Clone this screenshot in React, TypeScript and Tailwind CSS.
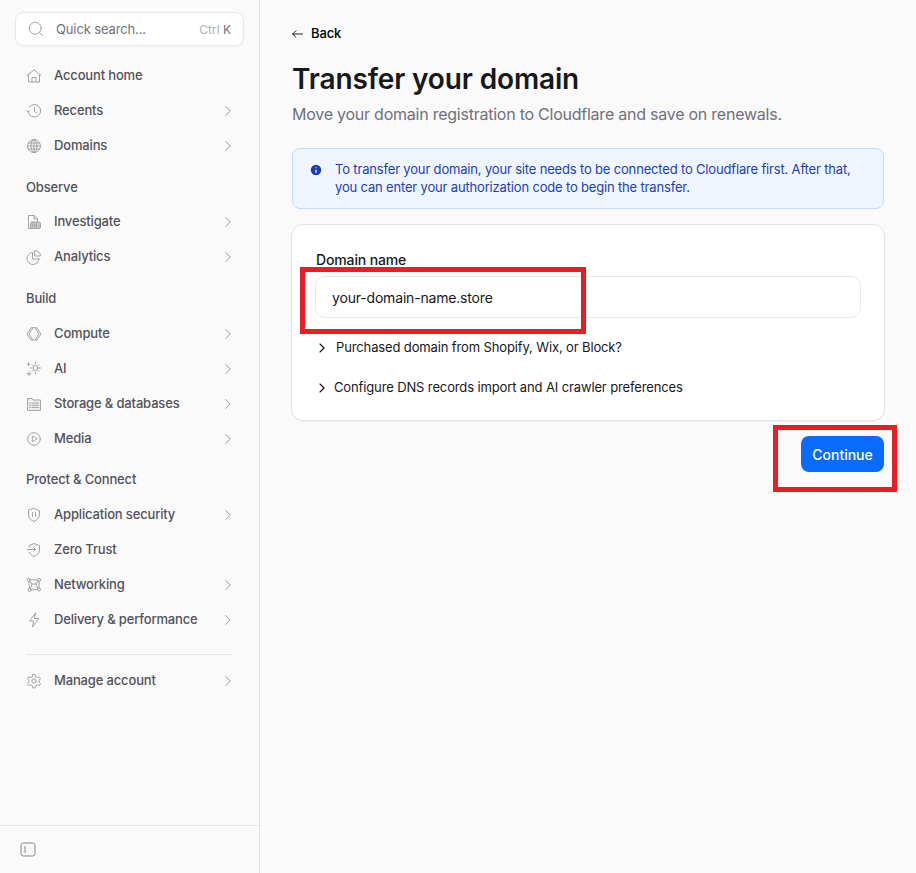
import React from "react";
import { ChevronRight, Search, Info } from "lucide-react";

const S = ({ children }: { children: React.ReactNode }) => (
  <svg width="16" height="16" viewBox="0 0 16 16" fill="none" stroke="#a3a3a3" strokeWidth="1" strokeLinecap="round" strokeLinejoin="round" className="shrink-0">
    {children}
  </svg>
);

const icons: Record<string, React.ReactNode> = {
  home: <S><path d="M1 7.500 8 2l7 5.500" /><path d="M2.500 6.500V14h11V6.500" /><path d="M6 14V9.500h4V14" /></S>,
  recents: <S><path d="M3.200 4.200A6.300 6.300 0 1 1 2.200 9" /><path d="M.8 7.500 2 9l1.600-1.200" /><path d="M8.500 4.500V8.500l2.500 1.500" /></S>,
  globe: <S><circle cx="8" cy="8" r="6.500" /><ellipse cx="8" cy="8" rx="3" ry="6.500" /><path d="M1.500 8h13M2.400 5h11.200M2.400 11h11.200M8 1.500v13" /></S>,
  investigate: <S><path d="M5 14.500H2.500V1.500H8L11.500 5V7.500" /><path d="M8 1.500V5h3.500" /><rect x="4.500" y="8" width="10" height="6.500" rx="1.500" fill="#c4c4c4" /><path d="M6.500 10v2.500M8.500 10v2.500M10.500 10v2.500" /></S>,
  analytics: <S><path d="M6.500 3.500a6 6 0 1 0 6.500 6.500" /><path d="M6.500 3.500V10H13" /><path d="M9 1.500a5.500 5.500 0 0 1 5.500 5.500H9Z" /></S>,
  compute: <S><path d="M5 2 1 8l4 6h6l4-6-4-6Z" /><path d="M6.500 2.500 3 8l3.500 5.500" /><path d="M9.500 2.500 13 8l-3.500 5.500" /></S>,
  ai: <S><circle cx="9.500" cy="7" r="2.500" /><path d="M9.500 1.500V3M9.500 11v1.500M4.500 7H6M13 7h1.500M6 3.500l1 1M12 9.500l1 1M13 3.500l-1 1M7 9.500l-1 1" /><path d="M2.500 2v2.500M1.200 3.200h2.600M3 11v3.500M1 12.800h4" /></S>,
  storage: <S><path d="M1.500 14V2.500h4.500l1 1.500h7.500v10Z" fill="#f0f0f0" /><path d="M3.500 7h1M6 7h6.500M3.500 9.200h1M6 9.200h6.500M3.500 11.400h1M6 11.400h6.500" /></S>,
  media: <S><circle cx="8" cy="8" r="6.300" /><path d="M6.300 5.300v5.400L10.800 8Z" /></S>,
  appsec: <S><path d="M8 1.500 13.500 3.500V8c0 3-2.500 5.200-5.500 6.500C5 13.200 2.500 11 2.500 8V3.500Z" /><path d="M6.500 5.500v4M9.500 5.500v4" /></S>,
  zero: <S><path d="M3 5V3.500L8 1.500l5.500 2V8c0 3-2.500 5.200-5.500 6.500C5.500 13.400 3.700 11.800 3 10" /><path d="M1.500 7.500H9.500M7.500 5.500l2 2-2 2" /></S>,
  network: <S><circle cx="2.800" cy="2.800" r="1.500" /><circle cx="13.200" cy="2.800" r="1.500" /><circle cx="3.500" cy="13" r="1.500" /><circle cx="13" cy="12.500" r="1.500" /><path d="M4.300 2.800h7.400M2.900 4.300 3.400 11.500M13.200 4.300 13 11M5 13l6.500-.5M3.900 3.900 6 7l-1.500 4.900M12.100 3.900 10 7l1.900 4.400M6 7h4" /></S>,
  bolt: <S><path d="M9.500 1 3.500 9h4l-1 6 6-8.500H8.500Z" /></S>,
  gear: <S><path d="M6.800 1.500h2.400l.4 2 1.800 1 1.900-.7 1.200 2.100-1.500 1.300v2l1.500 1.300-1.200 2.100-1.900-.7-1.800 1-.4 2H6.800l-.4-2-1.800-1-1.900.7-1.200-2.100 1.500-1.300v-2L1.500 5.900l1.200-2.100 1.900.7 1.800-1Z" /><circle cx="8" cy="8" r="2.200" /></S>,
};

function NavRow({ icon, label, chevron = true }: { icon: string; label: string; chevron?: boolean }) {
  return (
    <div className="flex h-[35px] items-center">
      <span className="flex w-7 items-center">{icons[icon]}</span>
      <span className="flex-1 text-[13px] font-medium tracking-[-0.012em] text-[#52525b]">{label}</span>
      {chevron && <ChevronRight size={18} strokeWidth={1} className="mr-[-4px] mt-[-1px] text-[#777777]" />}
    </div>
  );
}

function SectionLabel({ children, className }: { children: React.ReactNode; className: string }) {
  return <div className={`text-[13px] font-medium leading-5 tracking-[-0.012em] text-[#52525b] ${className}`}>{children}</div>;
}

export default function App() {
  return (
    <div className="flex h-[873px] w-[916px] overflow-hidden bg-[#fafafa] font-['Inter',sans-serif]">
      <aside className="flex h-full w-[260px] shrink-0 flex-col border-r border-[#e5e5e5]">
        <div className="flex-1 px-[15px] pt-3">
          <div className="flex h-[34px] items-center rounded-lg border border-[#e8e8e8] bg-white pl-[11px] pr-3 shadow-[0_1px_2px_rgba(0,0,0,0.03)]">
            <Search size={18} strokeWidth={1} className="text-[#8a8a8a]" />
            <span className="ml-[11px] flex-1 pt-px text-[13px] tracking-[-0.01em] text-[#71717a]">Quick search...</span>
            <span className="pt-px text-xs text-[#b0b0b0]">Ctrl <span className="text-[#71717a]">K</span></span>
          </div>
          <div className="mt-[12.500px] pl-[11px] pr-[11px]">
            <NavRow icon="home" label="Account home" chevron={false} />
            <NavRow icon="recents" label="Recents" />
            <NavRow icon="globe" label="Domains" />
            <SectionLabel className="mb-[7.500px] mt-[13.500px]">Observe</SectionLabel>
            <NavRow icon="investigate" label="Investigate" />
            <NavRow icon="analytics" label="Analytics" />
            <SectionLabel className="mb-[9px] mt-[13px]">Build</SectionLabel>
            <NavRow icon="compute" label="Compute" />
            <NavRow icon="ai" label="AI" />
            <NavRow icon="storage" label="Storage & databases" />
            <NavRow icon="media" label="Media" />
            <SectionLabel className="mb-[9px] mt-[12px]">Protect & Connect</SectionLabel>
            <NavRow icon="appsec" label="Application security" />
            <NavRow icon="zero" label="Zero Trust" chevron={false} />
            <NavRow icon="network" label="Networking" />
            <NavRow icon="bolt" label="Delivery & performance" />
            <div className="mt-[16px] border-t border-[#e5e5e5]" />
            <div className="mt-[9px]"><NavRow icon="gear" label="Manage account" /></div>
          </div>
        </div>
        <div className="flex h-[48px] items-center border-t border-[#e5e5e5] pl-5">
          <svg width="16" height="15" viewBox="0 0 16 15" fill="none" stroke="#858585" strokeWidth="1">
            <rect x="1" y="1" width="14" height="13" rx="2.500" />
            <path d="M5 4v7" />
          </svg>
        </div>
      </aside>

      <main className="relative flex-1 px-8 pt-[24px]">
        <div className="flex h-5 items-center gap-2 text-[13px] font-medium tracking-[-0.01em] text-black">
          <svg width="11" height="8" viewBox="0 0 11 8" fill="none" stroke="#222222" strokeWidth="1" strokeLinecap="round" strokeLinejoin="round">
            <path d="M10.500 4H.8M4 .7.700 4 4 7.300" />
          </svg>
          <span>Back</span>
        </div>
        <h1 className="mt-[11px] text-[28px] font-semibold leading-[48px] tracking-[-0.005em] text-[#18181b]">Transfer your domain</h1>
        <p className="mt-[-1px] text-base leading-6 tracking-[-0.015em] text-[#71717a]">Move your domain registration to Cloudflare and save on renewals.</p>

        <div className="mt-[22px] flex h-[61px] rounded-lg border border-[#bfdbfe] bg-[#eff6ff] pl-[16px] pr-4 pt-[11px]">
          <Info size={14} className="mr-[12px] mt-[3px] shrink-0 fill-[#1e40af] text-[#eff6ff]" strokeWidth={2} />
          <p className="text-[13px] leading-[18px] tracking-[-0.013em] text-[#1e40af]">
            To transfer your domain, your site needs to be connected to Cloudflare first. After that,
            you can enter your authorization code to begin the transfer.
          </p>
        </div>

        <div className="-mx-px mt-[15px] h-[197px] rounded-xl border border-[#e2e2e2] bg-white px-6 pt-[25px] shadow-[0_1px_1px_rgba(0,0,0,0.03)]">
          <div className="text-sm font-medium leading-5 tracking-[-0.01em] text-[#18181b]">Domain name</div>
          <div className="-ml-px -mr-px mt-[6px] flex h-[42px] items-center rounded-[10px] border border-[#e8e8e8] bg-white pl-4 pt-[2px] text-sm tracking-[-0.013em] text-[#18181b]">
            your-domain-name.store
          </div>
          <div className="mt-[20px] flex h-5 items-center text-[13px] tracking-[-0.01em] text-[#18181b]">
            <ChevronRight size={16} strokeWidth={1.75} className="ml-[-2px] mr-[6px]" />
            <span>Purchased domain from Shopify, Wix, or Block?</span>
          </div>
          <div className="mt-[20px] flex h-5 items-center text-[13px] tracking-[-0.01em] text-[#18181b]">
            <ChevronRight size={16} strokeWidth={1.75} className="ml-[-2px] mr-[4px]" />
            <span>Configure DNS records import and AI crawler preferences</span>
          </div>
        </div>

        <div className="mt-[15px] flex justify-end">
          <button className="flex h-9 w-[83px] items-center justify-center rounded-lg bg-[#0a6cff] pt-[2px] text-sm font-medium text-white">Continue</button>
        </div>

        <div className="absolute left-[40px] top-[267px] h-[67px] w-[286px] border-[5px] border-[#ed1c24]" />
        <div className="absolute left-[513px] top-[425px] h-[67px] w-[124px] border-[5px] border-[#ed1c24]" />
      </main>
    </div>
  );
}
